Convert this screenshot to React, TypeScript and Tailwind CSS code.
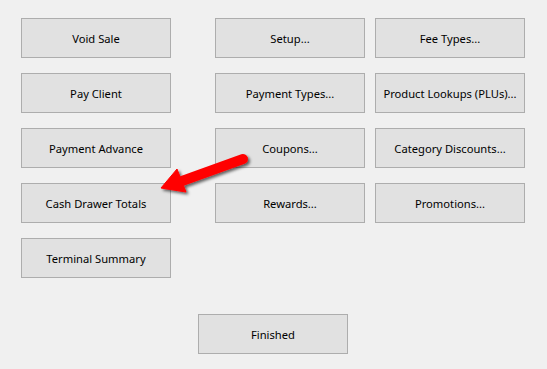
import React from 'react';

const COL1 = ['Void Sale', 'Pay Client', 'Payment Advance', 'Cash Drawer Totals', 'Terminal Summary'];
const COL2 = ['Setup...', 'Payment Types...', 'Coupons...', 'Rewards...'];
const COL3 = ['Fee Types...', 'Product Lookups (PLUs)...', 'Category Discounts...', 'Promotions...'];

function Btn({ label }: { label: string }) {
  return (
    <button className="w-[150px] h-[40px] border border-[#adadad] bg-[#e1e1e1] text-[11.2px] text-black flex items-center justify-center pt-[2px]">
      {label}
    </button>
  );
}

function Arrow() {
  return (
    <svg className="absolute left-0 top-0 pointer-events-none" width="547" height="369">
      <defs>
        <filter id="sh" x="-20%" y="-20%" width="140%" height="140%">
          <feDropShadow dx="2" dy="2" stdDeviation="1.5" floodColor="#000" floodOpacity="0.6" />
        </filter>
      </defs>
      <g filter="url(#sh)" fill="#f00" stroke="#f00">
        <line x1="243" y1="159" x2="182" y2="181" strokeWidth="10" strokeLinecap="round" />
        <polygon points="161,188 177,169 186,192" strokeWidth="1" strokeLinejoin="round" />
      </g>
    </svg>
  );
}

export default function App() {
  return (
    <div
      className="relative w-[547px] h-[369px] bg-[#f0f0f0] pt-[18px] pl-[21px] overflow-hidden"
      style={{ fontFamily: '"Noto Sans", "Open Sans", sans-serif' }}
    >
      <div className="flex">
        <div className="flex flex-col gap-[15px]">
          {COL1.map((l) => <Btn key={l} label={l} />)}
        </div>
        <div className="flex flex-col gap-[15px] ml-[44px]">
          {COL2.map((l) => <Btn key={l} label={l} />)}
        </div>
        <div className="flex flex-col gap-[15px] ml-[10px]">
          {COL3.map((l) => <Btn key={l} label={l} />)}
        </div>
      </div>
      <div className="mt-[36px] ml-[177px]">
        <Btn label="Finished" />
      </div>
      <Arrow />
    </div>
  );
}
